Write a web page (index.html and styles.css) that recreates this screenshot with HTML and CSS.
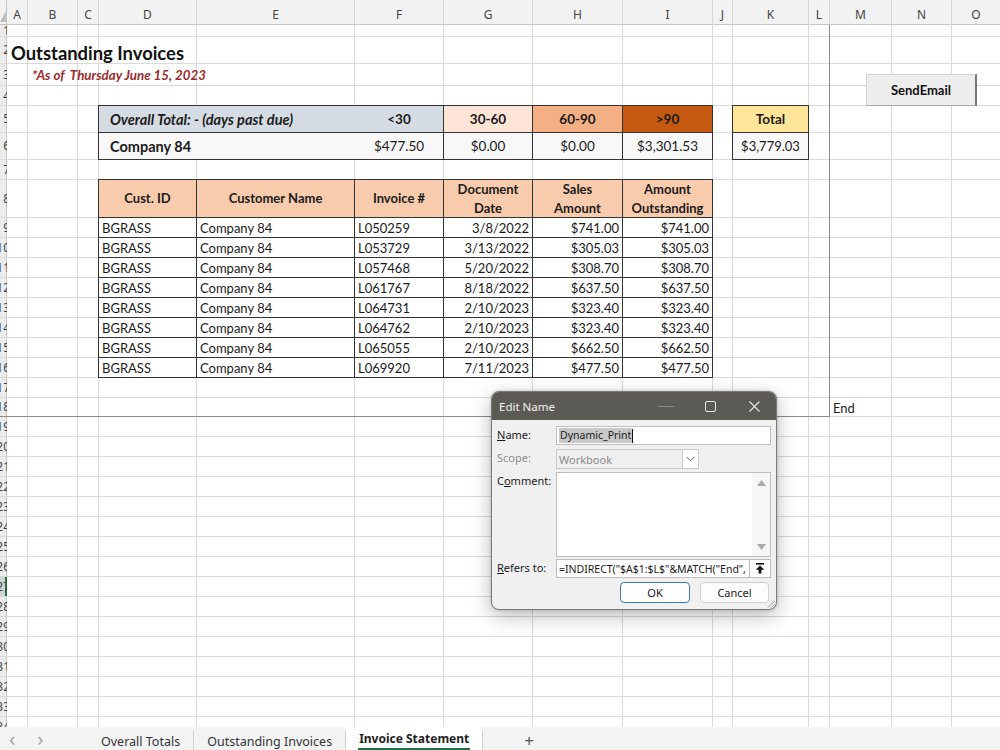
FILE: index.html
```html
<!DOCTYPE html>
<html lang="en">
<head>
    <meta charset="UTF-8">
    <meta name="viewport" content="width=device-width, initial-scale=1.0">
    <title>Invoice Statement</title>
    <link rel="stylesheet" href="styles.css">
</head>
<body>
<div class="app">
    <div class="colheads">
        <div class="corner"><svg width="7" height="25"><polygon points="7,9 7,22 0,22" fill="#bdbdbd"/></svg></div>
        <div class="ch">A</div>
        <div class="ch">B</div>
        <div class="ch">C</div>
        <div class="ch">D</div>
        <div class="ch">E</div>
        <div class="ch">F</div>
        <div class="ch">G</div>
        <div class="ch">H</div>
        <div class="ch">I</div>
        <div class="ch">J</div>
        <div class="ch">K</div>
        <div class="ch">L</div>
        <div class="ch">M</div>
        <div class="ch">N</div>
        <div class="ch">O</div>
    </div>

    <div class="sheet">
        <!-- gridlines and row numbers -->
        <div class="rows">
            <div class="row"><i>1</i></div>
            <div class="row"><i>2</i></div>
            <div class="row"><i>3</i></div>
            <div class="row"><i>4</i></div>
            <div class="row"><i>5</i></div>
            <div class="row"><i>6</i></div>
            <div class="row"><i>7</i></div>
            <div class="row"><i>8</i></div>
            <div class="row"><i>9</i></div>
            <div class="row"><i>10</i></div>
            <div class="row"><i>11</i></div>
            <div class="row"><i>12</i></div>
            <div class="row"><i>13</i></div>
            <div class="row"><i>14</i></div>
            <div class="row"><i>15</i></div>
            <div class="row"><i>16</i></div>
            <div class="row"><i>17</i></div>
            <div class="row"><i>18</i></div>
            <div class="row"><i>19</i></div>
            <div class="row"><i>20</i></div>
            <div class="row"><i>21</i></div>
            <div class="row"><i>22</i></div>
            <div class="row"><i>23</i></div>
            <div class="row"><i>24</i></div>
            <div class="row"><i>25</i></div>
            <div class="row"><i>26</i></div>
            <div class="row sel"><i>27</i></div>
            <div class="row"><i>28</i></div>
            <div class="row"><i>29</i></div>
            <div class="row"><i>30</i></div>
            <div class="row"><i>31</i></div>
            <div class="row"><i>32</i></div>
            <div class="row"><i>33</i></div>
            <div class="row"><i>34</i></div>
        </div>

        <!-- cell contents -->
        <div class="cells">
            <div class="print-area"></div>

            <div class="title">Outstanding Invoices</div>
            <div class="as-of">*As of&nbsp; Thursday June 15, 2023</div>

            <div class="summary">
                <div class="c lbl wide blue"><em>Overall Total: - (days past due)</em></div>
                <div class="c ctr b blue">&lt;30</div>
                <div class="c ctr b age1">30-60</div>
                <div class="c ctr b age2">60-90</div>
                <div class="c ctr b age3">&gt;90</div>
                <div class="c lbl wide b light">Company 84</div>
                <div class="c ctr light">$477.50</div>
                <div class="c ctr light">$0.00</div>
                <div class="c ctr light">$0.00</div>
                <div class="c ctr light">$3,301.53</div>
            </div>

            <div class="total-box">
                <div class="c ctr b total-head">Total</div>
                <div class="c ctr light">$3,779.03</div>
            </div>

            <div class="invoices">
                <div class="c th">Cust. ID</div>
                <div class="c th">Customer Name</div>
                <div class="c th">Invoice #</div>
                <div class="c th">Document<br>Date</div>
                <div class="c th">Sales<br>Amount</div>
                <div class="c th">Amount<br>Outstanding</div>

                <div class="c">BGRASS</div><div class="c">Company 84</div><div class="c">L050259</div>
                <div class="c num">3/8/2022</div><div class="c num">$741.00</div><div class="c num">$741.00</div>

                <div class="c">BGRASS</div><div class="c">Company 84</div><div class="c">L053729</div>
                <div class="c num">3/13/2022</div><div class="c num">$305.03</div><div class="c num">$305.03</div>

                <div class="c">BGRASS</div><div class="c">Company 84</div><div class="c">L057468</div>
                <div class="c num">5/20/2022</div><div class="c num">$308.70</div><div class="c num">$308.70</div>

                <div class="c">BGRASS</div><div class="c">Company 84</div><div class="c">L061767</div>
                <div class="c num">8/18/2022</div><div class="c num">$637.50</div><div class="c num">$637.50</div>

                <div class="c">BGRASS</div><div class="c">Company 84</div><div class="c">L064731</div>
                <div class="c num">2/10/2023</div><div class="c num">$323.40</div><div class="c num">$323.40</div>

                <div class="c">BGRASS</div><div class="c">Company 84</div><div class="c">L064762</div>
                <div class="c num">2/10/2023</div><div class="c num">$323.40</div><div class="c num">$323.40</div>

                <div class="c">BGRASS</div><div class="c">Company 84</div><div class="c">L065055</div>
                <div class="c num">2/10/2023</div><div class="c num">$662.50</div><div class="c num">$662.50</div>

                <div class="c">BGRASS</div><div class="c">Company 84</div><div class="c">L069920</div>
                <div class="c num">7/11/2023</div><div class="c num">$477.50</div><div class="c num">$477.50</div>
            </div>

            <div class="end-mark">End</div>
        </div>

        <button class="send-btn">SendEmail</button>
    </div>

    <div class="tabs">
        <div class="tab-nav"><span>&lsaquo;</span><span>&rsaquo;</span></div>
        <div class="tab">Overall Totals</div>
        <span class="sep"></span>
        <div class="tab">Outstanding Invoices</div>
        <span class="sep"></span>
        <div class="tab active"><span>Invoice Statement</span></div>
        <span class="sep"></span>
        <div class="tab-add">+</div>
    </div>

    <!-- Edit Name dialog -->
    <div class="dialog">
        <div class="dlg-title">
            <span class="dlg-caption">Edit Name</span>
            <span class="win-btn"><svg width="16" height="10"><path d="M0 5.5H16" stroke="#8c8a85"/></svg></span>
            <span class="win-btn"><svg width="11" height="11"><rect x="0.5" y="0.5" width="10" height="10" rx="1.5" fill="none" stroke="#e6e6e6"/></svg></span>
            <span class="win-btn"><svg width="11" height="11"><path d="M0.5 0.5L10.5 10.5M10.5 0.5L0.5 10.5" stroke="#e6e6e6" stroke-width="1.1"/></svg></span>
        </div>
        <div class="dlg-body">
            <div class="field-row">
                <label class="dlg-label"><u>N</u>ame:</label>
                <div class="text-box"><span class="selected">Dynamic_Print</span><span class="caret"></span></div>
            </div>
            <div class="field-row scope-row">
                <label class="dlg-label disabled">Scope:</label>
                <div class="select-box">
                    <span class="select-text">Workbook</span>
                    <span class="chev"><svg width="9" height="6"><path d="M0.5 0.8L4.5 4.8L8.5 0.8" fill="none" stroke="#666"/></svg></span>
                </div>
            </div>
            <div class="field-row comment-row">
                <label class="dlg-label">C<u>o</u>mment:</label>
                <div class="text-box comment-box">
                    <div class="scrollbar">
                        <svg width="9" height="6"><polygon points="4.5,0 9,6 0,6" fill="#a9a9a9"/></svg>
                        <svg width="9" height="6"><polygon points="0,0 9,0 4.5,6" fill="#a9a9a9"/></svg>
                    </div>
                </div>
            </div>
            <div class="field-row refers-row">
                <label class="dlg-label"><u>R</u>efers to:</label>
                <div class="text-box refers-box">=INDIRECT("$A$1:$L$"&amp;MATCH("End",</div>
                <span class="collapse-btn"><svg width="10" height="11"><rect x="1" y="0" width="8" height="1.6" fill="#111"/><path d="M5 2.6L9.2 6.8H6.4V10.5H3.6V6.8H0.8Z" fill="#111"/></svg></span>
            </div>
            <div class="dlg-buttons">
                <button class="dlg-btn default">OK</button>
                <button class="dlg-btn">Cancel</button>
            </div>
        </div>
        <svg class="grip" width="8" height="8"><path d="M7.5 1L1 7.5M7.5 4.5L4.5 7.5" stroke="#9a9a9a"/></svg>
    </div>
</div>
</body>
</html>
```

FILE: styles.css
```css
* {
    box-sizing: border-box;
}

body {
    margin: 0;
    background-color: #fff;
    font-family: Lato, 'Liberation Sans', sans-serif;
    color: #1b1b1b;
}

.app {
    --cols: 7px 21px 50px 21px 98px 158px 89px 89px 90px 90px 20px 76px 21px 62px 60px 1fr;
    --rows: 12px 27px 22px 20px 27px 27px 20px 38px repeat(9, 20px) 19px;
    position: relative;
    width: 1000px;
    height: 750px;
    overflow: hidden;
    display: flex;
    flex-direction: column;
    background-color: #fff;
}

/* column letters */
.colheads {
    height: 25px;
    flex: none;
    display: grid;
    grid-template-columns: var(--cols);
    background-color: #f2f2f2;
    border-bottom: 1px solid #c8c8c8;
    font-family: 'Noto Sans', sans-serif;
    font-size: 12px;
    color: #444;
}

.corner {
    border-right: 1px solid #c6c6c6;
    overflow: hidden;
}

.corner svg {
    display: block;
}

.ch {
    border-right: 1px solid #d8d8d8;
    text-align: center;
    padding-top: 6px;
    line-height: 17px;
}

.ch:last-child {
    border-right: none;
}

/* the worksheet: a row layer and a cell layer stacked in one grid area */
.sheet {
    flex: 1;
    min-height: 0;
    position: relative;
    overflow: hidden;
    display: grid;
    grid-template-columns: 100%;
    align-content: start;
}

.rows, .cells {
    grid-area: 1 / 1;
    display: grid;
    grid-template-rows: var(--rows);
    grid-auto-rows: 20px;
}

.rows {
    background: linear-gradient(to right,
        transparent 27px, #dadada 27px 28px,
        transparent 28px 77px, #dadada 77px 78px,
        transparent 78px 98px, #dadada 98px 99px,
        transparent 99px 196px, #dadada 196px 197px,
        transparent 197px 354px, #dadada 354px 355px,
        transparent 355px 443px, #dadada 443px 444px,
        transparent 444px 532px, #dadada 532px 533px,
        transparent 533px 622px, #dadada 622px 623px,
        transparent 623px 712px, #dadada 712px 713px,
        transparent 713px 732px, #dadada 732px 733px,
        transparent 733px 808px, #dadada 808px 809px,
        transparent 809px 829px, #dadada 829px 830px,
        transparent 830px 891px, #dadada 891px 892px,
        transparent 892px 951px, #dadada 951px 952px,
        transparent 952px) #fff;
}

.cells {
    grid-template-columns: var(--cols);
}

.row {
    display: flex;
    align-items: center;
    border-bottom: 1px solid #dadada;
    background: linear-gradient(to right, #ececec 6px, #c6c6c6 6px 7px, transparent 7px);
}

.row i {
    display: block;
    width: 7px;
    overflow: hidden;
    white-space: nowrap;
    direction: rtl;
    text-indent: -3px;
    font-style: normal;
    font-family: 'Noto Sans', sans-serif;
    font-size: 12px;
    line-height: 14px;
    color: #444;
}

.row.sel {
    background: linear-gradient(to right, #d2d2d2 5px, #217346 5px 7px, transparent 7px);
}

.print-area {
    grid-column: 1 / 14;
    grid-row: 1 / 19;
    border-right: 1px solid #8c8c8c;
    border-bottom: 1px solid #8c8c8c;
}

.title {
    grid-column: 2 / 8;
    grid-row: 2;
    align-self: end;
    padding-left: 4px;
    font-size: 18.4px;
    font-weight: 700;
    line-height: 22px;
    color: #111;
}

.as-of {
    grid-column: 3 / 8;
    grid-row: 3;
    align-self: center;
    padding-left: 4px;
    font-size: 13.3px;
    font-weight: 700;
    font-style: italic;
    color: #9c2b2b;
}

/* cells shared by the small tables */
.c {
    display: flex;
    align-items: center;
    padding: 0 3px;
    white-space: nowrap;
    overflow: hidden;
    border-right: 1px solid #333;
    border-bottom: 1px solid #333;
    font-size: 13px;
}

.c.ctr {
    justify-content: center;
}

.c.num {
    justify-content: flex-end;
}

.c.b {
    font-weight: 700;
}

.summary, .total-box, .invoices {
    display: grid;
    margin: -1px 0 0 -1px;
    border-top: 1px solid #333;
    border-left: 1px solid #333;
}

.summary {
    grid-column: 5 / 11;
    grid-row: 5 / 7;
    grid-template-columns: 98px 158px 89px 89px 90px 90px;
    grid-template-rows: 27px 27px;
}

.summary .c {
    font-size: 13.5px;
}

.summary .wide {
    grid-column: span 2;
    border-right: none;
    padding-left: 11px;
    font-size: 14.5px;
}

.summary em {
    font-weight: 700;
}

.blue {
    background-color: #d6dce4;
}

.age1 {
    background-color: #fce4d6;
}

.age2 {
    background-color: #f4b084;
}

.age3 {
    background-color: #c65911;
}

.light {
    background-color: #f8f8f8;
}

.total-box {
    grid-column: 12 / 13;
    grid-row: 5 / 7;
    grid-template-rows: 27px 27px;
}

.total-head {
    background-color: #ffe699;
    font-size: 13.5px;
}

.invoices {
    grid-column: 5 / 11;
    grid-row: 8 / 17;
    grid-template-columns: 98px 158px 89px 89px 90px 90px;
    grid-template-rows: 38px repeat(8, 20px);
}

.invoices .th {
    justify-content: center;
    text-align: center;
    background-color: #f8cbad;
    font-weight: 700;
    line-height: 19px;
}

.end-mark {
    grid-column: 14;
    grid-row: 18;
    align-self: center;
    padding-left: 3px;
    font-size: 13px;
}

.send-btn {
    position: absolute;
    left: 866px;
    top: 49px;
    width: 111px;
    height: 32px;
    background-color: #eeeeee;
    border: 1px solid #d4d4d4;
    border-right: 2px solid #777;
    border-bottom: 1px solid #a8a8a8;
    font-family: Lato, sans-serif;
    font-size: 13px;
    font-weight: 700;
    color: #111;
    padding: 0;
}

/* sheet tabs */
.tabs {
    height: 23px;
    flex: none;
    display: flex;
    align-items: stretch;
    background-color: #f3f3f3;
    font-family: 'Noto Sans', sans-serif;
    font-size: 12.5px;
    color: #333;
}

.tab-nav {
    width: 88px;
    display: flex;
    align-items: center;
    gap: 22px;
    padding-left: 9px;
    font-size: 20px;
    color: #a6a6a6;
}

.tab {
    display: flex;
    align-items: center;
    padding: 5px 13px 0 13px;
}

.tab.active {
    background-color: #fff;
    font-size: 12px;
    font-weight: 700;
    color: #222;
    padding: 0 12px;
    align-items: flex-end;
}

.tab.active span {
    border-bottom: 2px solid #1e7145;
    padding: 0 1px 1px;
    line-height: 17px;
}

.sep {
    width: 1px;
    background-color: #cfcfcf;
    margin-top: 4px;
}

.tab-add {
    margin-left: 41px;
    display: flex;
    align-items: center;
    padding-top: 3px;
    font-size: 17px;
    color: #555;
}

/* Edit Name dialog */
.dialog {
    position: absolute;
    left: 491px;
    top: 391px;
    width: 286px;
    height: 219px;
    z-index: 5;
    background-color: #f0f0f0;
    border: 1px solid #7a7975;
    border-radius: 8px;
    overflow: hidden;
    box-shadow: 0 6px 20px rgba(0, 0, 0, 0.28), 0 0 3px rgba(0, 0, 0, 0.2);
    font-family: 'Noto Sans', sans-serif;
    font-size: 10.5px;
    color: #1a1a1a;
}

.dlg-title {
    height: 28px;
    display: flex;
    align-items: center;
    background-color: #5c5a55;
    color: #f2f2f2;
}

.dlg-caption {
    flex: 1;
    padding-left: 7px;
    font-size: 11.5px;
}

.win-btn {
    width: 44px;
    height: 28px;
    display: flex;
    align-items: center;
    justify-content: center;
}

.dlg-body {
    padding: 6px 5px 0 5px;
}

.field-row {
    display: flex;
    align-items: flex-start;
    margin-bottom: 4px;
}

.dlg-label {
    width: 59px;
    flex: none;
    line-height: 17px;
    font-size: 11px;
}

.dlg-label.disabled {
    color: #8d8d8d;
}

.text-box {
    flex: 1;
    height: 19px;
    display: flex;
    align-items: center;
    padding-left: 2px;
    white-space: nowrap;
    overflow: hidden;
    background-color: #fff;
    border: 1px solid #bdbdbd;
}

.selected {
    background-color: #c8c8c8;
    padding: 0 1px;
    line-height: 15px;
}

.caret {
    width: 1px;
    height: 14px;
    background-color: #111;
}

.scope-row {
    margin-bottom: 3px;
}

.select-box {
    width: 143px;
    height: 20px;
    display: flex;
    align-items: stretch;
    border: 1px solid #cacaca;
    background-color: #f0f0f0;
    color: #8a8a8a;
}

.select-text {
    flex: 1;
    display: flex;
    align-items: center;
    padding-left: 2px;
    font-size: 11px;
}

.chev {
    width: 16px;
    display: flex;
    align-items: center;
    justify-content: center;
    background-color: #fff;
    border-left: 1px solid #cacaca;
}

.comment-row {
    margin-bottom: 2px;
}

.comment-box {
    height: 85px;
    justify-content: flex-end;
    align-items: stretch;
    padding: 0;
}

.scrollbar {
    width: 18px;
    display: flex;
    flex-direction: column;
    justify-content: space-between;
    align-items: center;
    padding: 7px 0 6px;
    background-color: #f6f6f6;
}

.scrollbar svg {
    display: block;
}

.refers-box {
    flex: none;
    width: 194px;
}

.collapse-btn {
    width: 21px;
    height: 19px;
    display: flex;
    align-items: center;
    justify-content: center;
    background-color: #fff;
    border: 1px solid #bdbdbd;
    border-left: none;
}

.dlg-buttons {
    display: flex;
    justify-content: flex-end;
    gap: 10px;
    padding-right: 2px;
}

.dlg-btn {
    height: 21px;
    width: 69px;
    padding: 0;
    background-color: #fdfdfd;
    border: 1px solid #d0d0d0;
    border-radius: 4px;
    font-family: 'Noto Sans', sans-serif;
    font-size: 11px;
    color: #1a1a1a;
}

.dlg-btn.default {
    width: 70px;
    border-color: #3d7bb0;
}

.grip {
    position: absolute;
    right: 1px;
    bottom: 1px;
}
```
